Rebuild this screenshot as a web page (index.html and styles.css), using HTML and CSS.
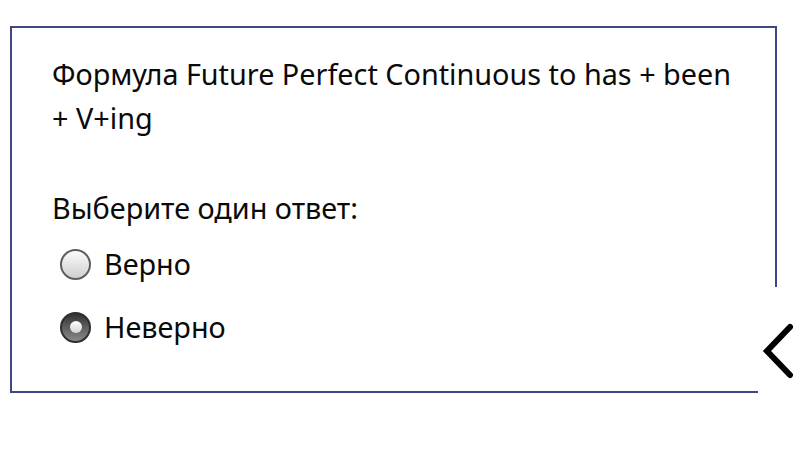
FILE: index.html
```html
<!DOCTYPE html>
<html lang="ru">
<head>
  <meta charset="UTF-8">
  <meta name="viewport" content="width=device-width, initial-scale=1.0">
  <title>Вопрос</title>
  <link rel="stylesheet" href="styles.css">
</head>
<body>
  <div class="que">
    <div class="qtext">Формула Future Perfect Continuous to has + been + V+ing</div>
    <div class="prompt">Выберите один ответ:</div>
    <div class="answer">
      <label class="opt">
        <span class="radio"></span>
        <span class="lbl">Верно</span>
      </label>
      <label class="opt">
        <span class="radio checked"></span>
        <span class="lbl">Неверно</span>
      </label>
    </div>
  </div>

  <div class="side">
    <svg width="36" height="56" viewBox="0 0 36 56">
      <polyline points="30,4 7,28 30,52" fill="none" stroke="#000" stroke-width="6" stroke-linecap="round" stroke-linejoin="miter"/>
    </svg>
  </div>
</body>
</html>
```

FILE: styles.css
```css
* {
  margin: 0;
  padding: 0;
  box-sizing: border-box;
}
body {
  background: #fff;
  font-family: "Noto Sans", "Open Sans", sans-serif;
  color: #0a0a0a;
}
.que {
  width: 767px;
  height: 367px;
  margin: 26px 0 0 10px;
  border: 2px solid #3f4682;
  padding: 24px 34px 0 40px;
}
.que .qtext {
  font-size: 28.8px;
  line-height: 44px;
}
.que .prompt {
  font-size: 28.8px;
  line-height: 44px;
  margin-top: 46px;
}
.que .answer {
  display: flex;
  flex-direction: column;
  gap: 19px;
  margin-top: 12px;
  padding-left: 8px;
}
.que .opt {
  display: flex;
  align-items: center;
  gap: 13px;
  font-size: 28.8px;
  line-height: 44px;
}
.radio {
  width: 31px;
  height: 31px;
  border-radius: 50%;
  border: 2px solid #5e5e5e;
  background: linear-gradient(#fbfbfb, #cfcfcf);
  position: relative;
}
.radio.checked {
  border-color: #2e2e2e;
  background: linear-gradient(#333, #8a8a8a);
}
.radio.checked::after {
  content: "";
  position: absolute;
  left: 7.5px;
  top: 7.5px;
  width: 12px;
  height: 12px;
  border-radius: 50%;
  background: linear-gradient(#fff, #d4d4d4);
}
.side {
  position: absolute;
  left: 758px;
  top: 287px;
  width: 50px;
  height: 120px;
  background: #fff;
  padding: 36px 0 0 2px;
}
```
